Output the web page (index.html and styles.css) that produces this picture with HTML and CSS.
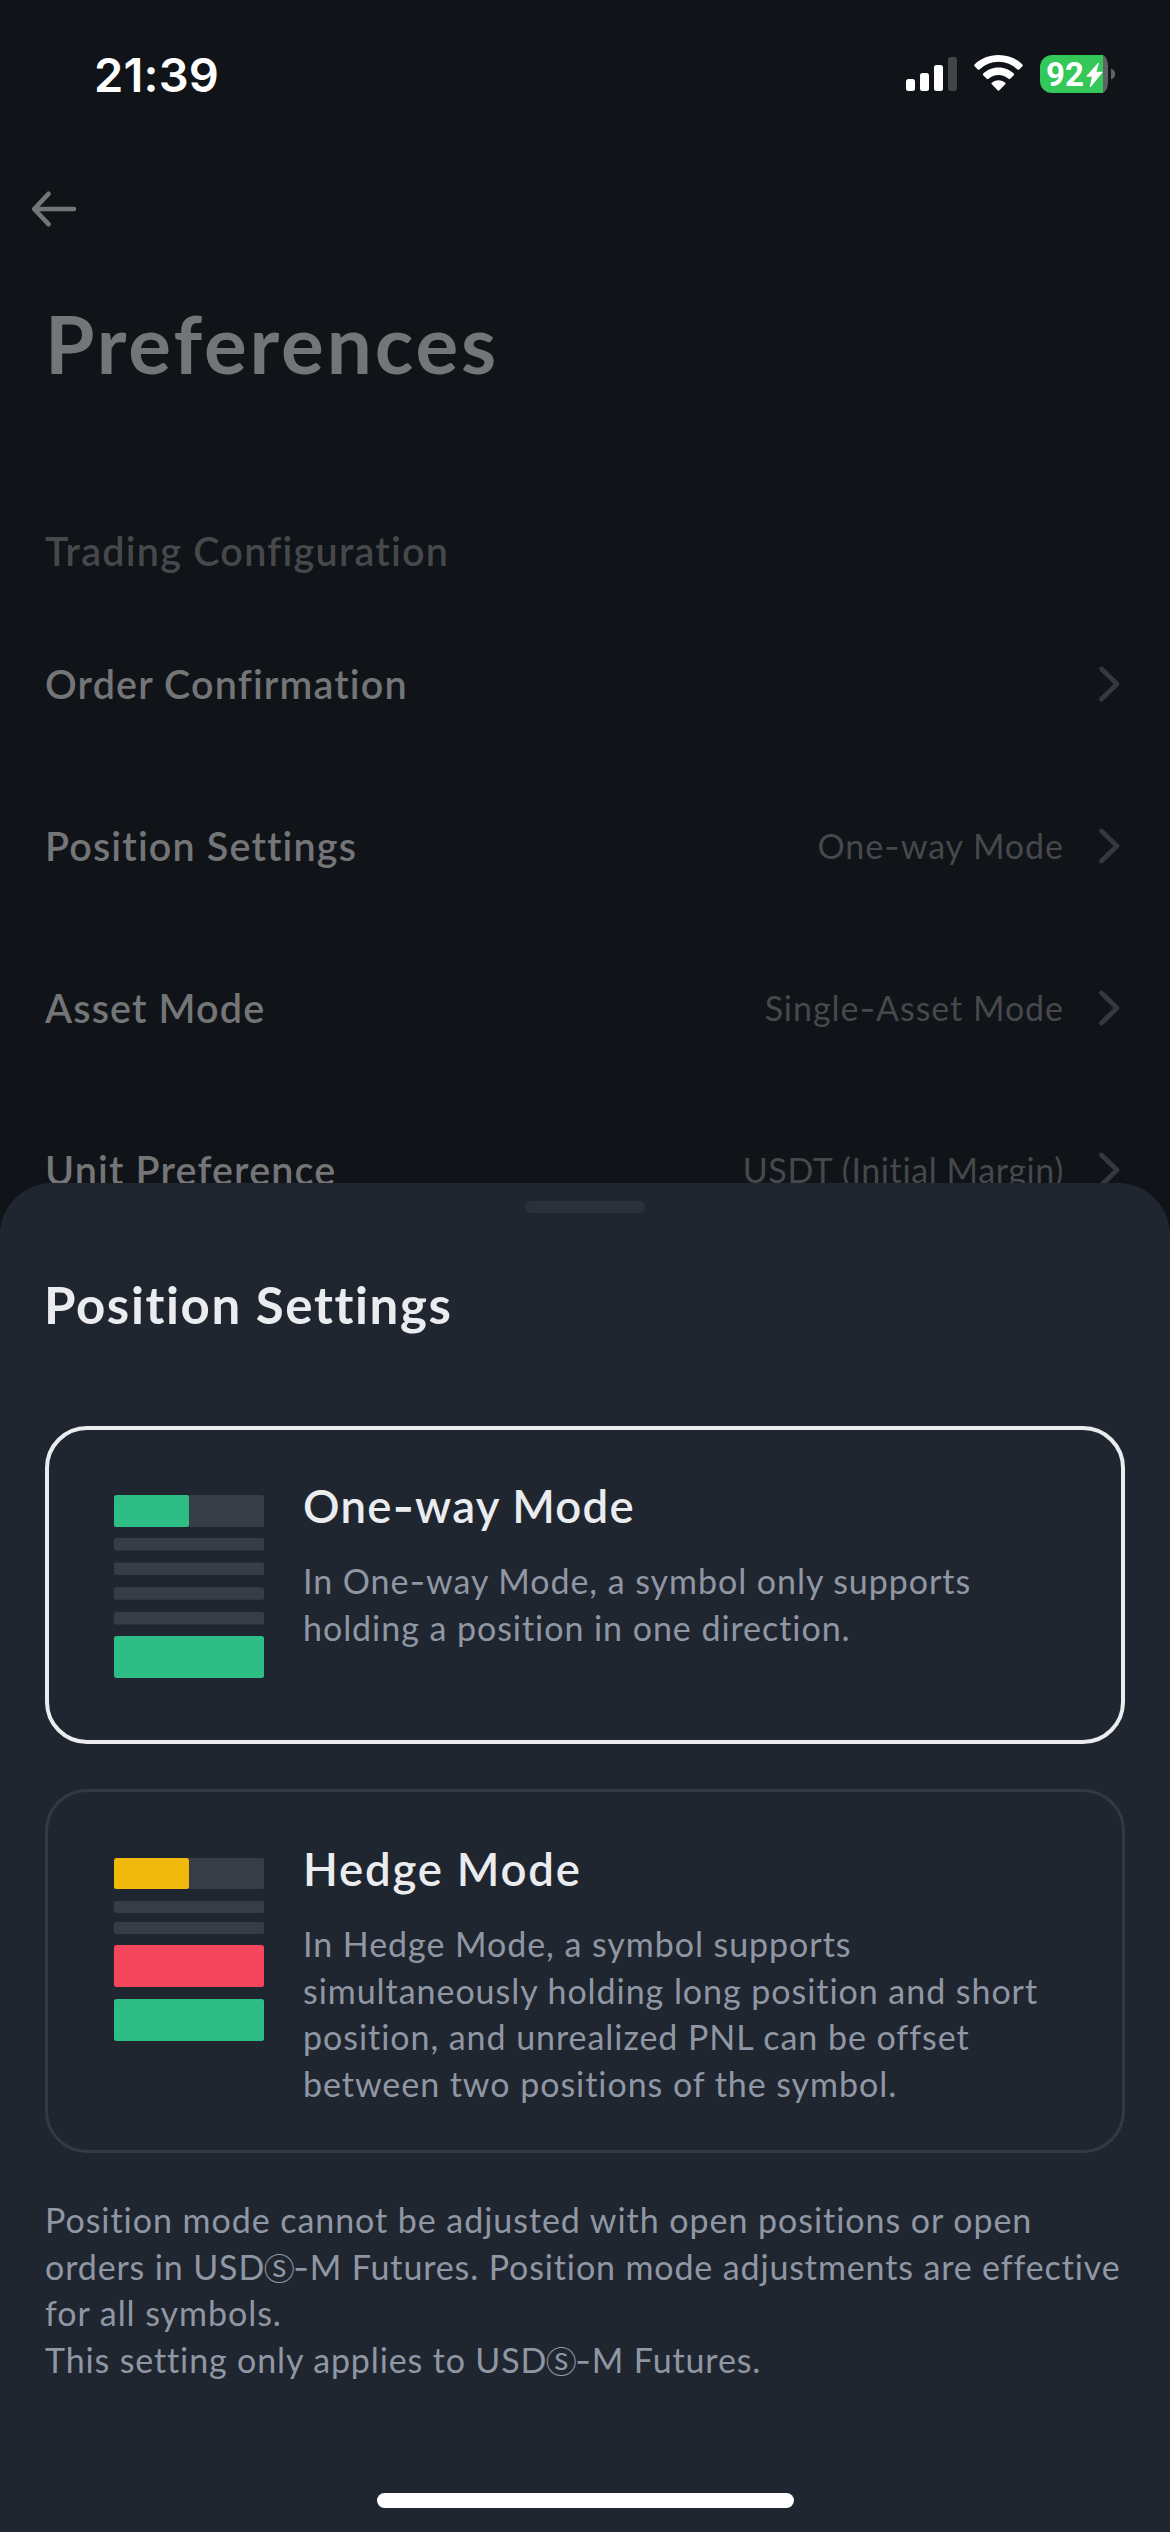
FILE: index.html
```html
<!DOCTYPE html>
<html lang="en">
<head>
<meta charset="utf-8">
<title>Preferences</title>
<link rel="stylesheet" href="styles.css">
</head>
<body>
<div class="screen">
  <header class="status">
    <span class="status-time">21:39</span>
    <div class="status-icons">
      <svg width="51" height="34" viewBox="0 0 51 34">
        <rect x="0" y="22" width="9" height="12" rx="2.5" fill="#fff"/>
        <rect x="14" y="16" width="9" height="18" rx="2.5" fill="#fff"/>
        <rect x="28" y="8" width="9" height="26" rx="2.5" fill="#fff"/>
        <rect x="42" y="0" width="9" height="34" rx="2.5" fill="#434447"/>
      </svg>
      <svg class="wifi" width="49" height="36" viewBox="0 0 49 36" fill="#fff">
        <path d="M24.5 0C34 0 42.600 3.600 48.400 9.400Q49.200 10.300 48.400 11.200L45.200 14.500Q44.400 15.200 43.500 14.400A27.500 27.500 0 0 0 5.500 14.400Q4.600 15.200 3.800 14.500L.6 11.200Q-.2 10.300 .6 9.400C6.400 3.600 15 0 24.500 0Z"/>
        <path d="M24.500 12.500C30.800 12.500 36 15 39.800 18.600Q40.600 19.500 39.800 20.300L36.200 23.800Q35.400 24.500 34.500 23.700A15 15 0 0 0 14.500 23.700Q13.600 24.500 12.800 23.800L9.200 20.300Q8.400 19.500 9.200 18.600C13 15 18.200 12.500 24.500 12.500Z"/>
        <path d="M24.500 25.300C27.200 25.300 29.500 26.200 31.200 27.700Q32 28.500 31.200 29.300L25.400 35.300Q24.500 36.200 23.600 35.300L17.800 29.300Q17 28.500 17.800 27.700C19.500 26.200 21.800 25.300 24.500 25.300Z"/>
      </svg>
      <svg width="76" height="38" viewBox="0 0 76 38">
        <path d="M12 0H63V38H12A12 12 0 0 1 0 26V12A12 12 0 0 1 12 0Z" fill="#34c759"/>
        <path d="M63 0A7 12 0 0 1 68 11V27A7 12 0 0 1 63 38Z" fill="#606366"/>
        <path d="M71 13.500Q75.200 15 75.200 19T71 24.500Z" fill="#606366"/>
        <text class="battery-text" x="6" y="31">92</text>
        <path d="M58.500 8L46.800 21.200H52.600L50.200 32L62.200 17.300H55.800Z" fill="#fff" stroke="#fff" stroke-width="1" stroke-linejoin="round"/>
      </svg>
    </div>
  </header>

  <nav class="nav">
    <svg width="46" height="36" viewBox="0 0 46 36" fill="none" stroke="#747577" stroke-width="4.600" stroke-linecap="round" stroke-linejoin="round">
      <path d="M17.500 2.800L3.200 18L17.500 33.200M4 18H42.900"/>
    </svg>
  </nav>

  <main class="prefs">
    <h1 class="page-title">Preferences</h1>
    <h2 class="section">Trading Configuration</h2>
    <div class="row">
      <span class="row-label">Order Confirmation</span>
      <svg class="chevron" viewBox="0 0 24 38"><path d="M4.500 4L20 19L4.500 34"/></svg>
    </div>
    <div class="row">
      <span class="row-label">Position Settings</span>
      <span class="row-value">One<span class="hy">-</span>way Mode</span>
      <svg class="chevron" viewBox="0 0 24 38"><path d="M4.500 4L20 19L4.500 34"/></svg>
    </div>
    <div class="row">
      <span class="row-label">Asset Mode</span>
      <span class="row-value">Single<span class="hy">-</span>Asset Mode</span>
      <svg class="chevron" viewBox="0 0 24 38"><path d="M4.500 4L20 19L4.500 34"/></svg>
    </div>
    <div class="row">
      <span class="row-label">Unit Preference</span>
      <span class="row-value tight">USDT (Initial Margin)</span>
      <svg class="chevron" viewBox="0 0 24 38"><path d="M4.500 4L20 19L4.500 34"/></svg>
    </div>
  </main>

  <section class="sheet">
    <div class="handle"></div>
    <h2 class="sheet-title">Position Settings</h2>

    <div class="card selected">
      <svg class="art" width="150" height="183" viewBox="0 0 150 183">
        <rect width="150" height="32" rx="2.500" fill="#383c45"/>
        <rect width="75" height="32" rx="2.500" fill="#2ebd85"/>
        <rect y="43" width="150" height="12.500" rx="2.500" fill="#383c45"/>
        <rect y="67.500" width="150" height="12.500" rx="2.500" fill="#383c45"/>
        <rect y="92.200" width="150" height="12.500" rx="2.500" fill="#383c45"/>
        <rect y="117" width="150" height="12.500" rx="2.500" fill="#383c45"/>
        <rect y="141" width="150" height="42" rx="2.500" fill="#2ebd85"/>
      </svg>
      <div class="card-body">
        <h3 class="card-title">One<span class="hy">-</span>way Mode</h3>
        <p class="desc">In One<span class="hy">-</span>way Mode, a symbol only supports<br>holding a position in one direction.</p>
      </div>
    </div>

    <div class="card">
      <svg class="art" width="150" height="183" viewBox="0 0 150 183">
        <rect width="150" height="31" rx="2.500" fill="#383c45"/>
        <rect width="75" height="31" rx="2.500" fill="#f0b90b"/>
        <rect y="43" width="150" height="12" rx="2.500" fill="#383c45"/>
        <rect y="64" width="150" height="12" rx="2.500" fill="#383c45"/>
        <rect y="87" width="150" height="42" rx="2.500" fill="#f6465d"/>
        <rect y="141" width="150" height="42" rx="2.500" fill="#2ebd85"/>
      </svg>
      <div class="card-body">
        <h3 class="card-title wide">Hedge Mode</h3>
        <p class="desc">In Hedge Mode, a symbol supports<br>simultaneously holding long position and short<br>position, and unrealized PNL can be offset<br>between two positions of the symbol.</p>
      </div>
    </div>

    <p class="desc note">Position mode cannot be adjusted with open positions or open<br><span class="snug">orders in USD<span class="coin">Ⓢ</span><span class="hy">-</span>M Futures. Position mode adjustments are effective</span><br>for all symbols.<br><span class="snug">This setting only applies to USD<span class="coin">Ⓢ</span><span class="hy">-</span>M Futures.</span></p>
    <div class="home"></div>
  </section>
</div>
</body>
</html>
```
FILE: styles.css
```css
* {
  box-sizing: border-box;
  margin: 0;
  padding: 0;
}

body {
  background: #101318;
  font-family: Lato, "Liberation Sans", sans-serif;
}

svg {
  display: block;
  flex: none;
}

.screen {
  position: relative;
  width: 1170px;
  height: 2532px;
  overflow: hidden;
  background: #101318;
}

.status {
  display: flex;
  justify-content: space-between;
  height: 141px;
  padding: 46px 54px 0 94px;
}

.status-time {
  font: 600 47px/58px Inter, sans-serif;
  letter-spacing: .2px;
  color: #fff;
}

.status-icons {
  display: flex;
  align-items: center;
  gap: 17px;
  height: 56px;
}

.wifi {
  margin-bottom: 2px;
}

.battery-text {
  font: 700 33px Roboto, sans-serif;
  fill: #fff;
}

.nav {
  display: flex;
  align-items: center;
  height: 136px;
  padding-left: 31px;
}

.prefs {
  display: flex;
  flex-direction: column;
}

.page-title {
  margin: 18px 0 0 45px;
  font-size: 80px;
  font-weight: 700;
  line-height: 96px;
  letter-spacing: 2.900px;
  color: #747577;
}

.section {
  margin: 136px 0 28px 45px;
  font-size: 39.500px;
  font-weight: 600;
  line-height: 48px;
  letter-spacing: 1.250px;
  color: #46484c;
}

.row {
  display: flex;
  align-items: center;
  height: 162px;
  padding: 0 49px 0 45px;
}

.row-label {
  flex: 1;
  padding-bottom: 2px;
  font-size: 39.500px;
  font-weight: 600;
  letter-spacing: 1.150px;
  color: #747577;
}

.row-value {
  margin-right: 31px;
  padding-bottom: 2px;
  font-size: 34px;
  letter-spacing: .95px;
  color: #46484c;
}

.row-value.tight {
  letter-spacing: .6px;
}

.chevron {
  width: 24px;
  height: 38px;
  margin-left: 2px;
  fill: none;
  stroke: #343840;
  stroke-width: 4.800px;
  stroke-linecap: round;
  stroke-linejoin: round;
}

/* Lato's hyphen is short and low, Inter's is long and raised */
.hy {
  font-family: Inter, sans-serif;
  line-height: 0;
}

.sheet {
  position: absolute;
  left: 0;
  right: 0;
  bottom: 0;
  height: 1349px;
  display: flex;
  flex-direction: column;
  padding: 18px 45px 24px;
  border-radius: 52px 52px 0 0;
  background: #202630;
}

.handle {
  align-self: center;
  width: 120px;
  height: 12px;
  border-radius: 6px;
  background: #2b303b;
}

.sheet-title {
  margin: 62px 0 91px;
  font-size: 51px;
  font-weight: 700;
  line-height: 60px;
  letter-spacing: 1.600px;
  text-indent: -1px;
  color: #eaecef;
}

.card {
  display: flex;
  gap: 39px;
  height: 364px;
  padding: 66px 0 0 66px;
  border: 3px solid #333a45;
  border-radius: 42px;
}

.card.selected {
  height: 318px;
  margin-bottom: 45px;
  padding: 65px 0 0 65px;
  border: 4px solid #eaecef;
}

.card-body {
  margin-top: -16px;
}

.card-title {
  margin-bottom: 25px;
  font-size: 45.500px;
  font-weight: 600;
  line-height: 54px;
  letter-spacing: 1.250px;
  color: #eaecef;
}

.card-title.wide {
  letter-spacing: 1.800px;
}

.desc {
  font-size: 34px;
  line-height: 46.600px;
  letter-spacing: .95px;
  white-space: nowrap;
  color: #9097a4;
}

.note {
  margin-top: 44px;
}

.snug {
  letter-spacing: .87px;
}

.coin {
  margin: 0 -1.500px;
  font-family: "Noto Sans CJK SC", sans-serif;
  font-size: 31px;
  line-height: 0;
  letter-spacing: 0;
}

.home {
  align-self: center;
  width: 417px;
  height: 15px;
  margin-top: auto;
  border-radius: 8px;
  background: #fff;
}
```
